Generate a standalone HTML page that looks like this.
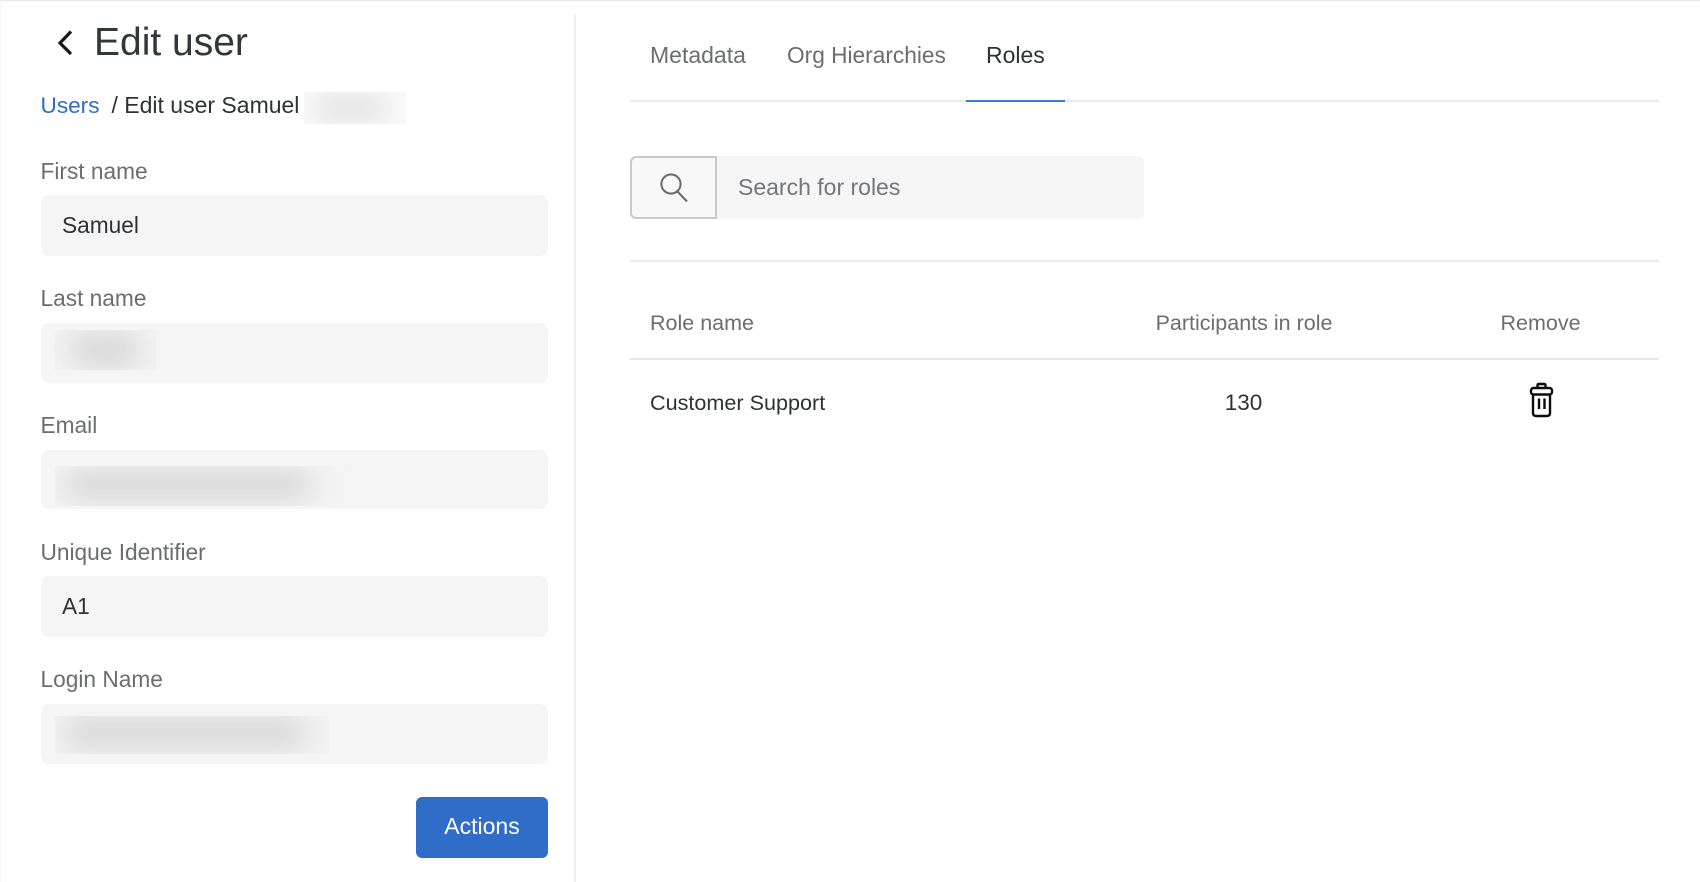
<!DOCTYPE html>
<html>
<head>
<meta charset="utf-8">
<title>Edit user</title>
<style>
html,body{margin:0;padding:0;background:#fff;}
body{position:relative;width:1700px;height:882px;overflow:hidden;font-family:"Liberation Sans",sans-serif;}
.t{position:absolute;white-space:nowrap;line-height:30px;height:30px;}
.lab{left:40.5px;font-size:22.7px;color:#6b6d70;}
.val{left:62px;font-size:22.7px;color:#2f3235;}
.box{position:absolute;left:41px;width:507px;background:#f5f5f5;border-radius:8px;}
.r{position:absolute;background:#e8e8e8;}
.bl{position:absolute;overflow:hidden;background:#f3f3f3;}
.bl i{position:absolute;display:block;background:#dcdddc;filter:blur(13px);}
.tab{font-size:23px;color:#6b6d70;}
.th{font-size:21.5px;color:#6b6d70;}
</style>
</head>
<body>
<div class="r" style="left:0;top:0;width:1700px;height:1px;"></div>
<div class="r" style="left:0;top:0;width:1px;height:882px;background:#f7f7f7;"></div>
<div class="r" style="left:574px;top:15px;width:2px;height:867px;background:#ececec;"></div>

<svg style="position:absolute;left:50px;top:25px" width="30" height="36" viewBox="50 25 30 36"><path d="M71 31.5 L60 43 L71 54" fill="none" stroke="#15171a" stroke-width="3.2"/></svg>
<div class="t" style="left:94px;top:28px;font-size:39px;color:#32363a;">Edit user</div>

<div class="t" style="left:40.5px;top:91px;font-size:22.6px;color:#2f6dc9;">Users</div>
<div class="t" style="left:111.5px;top:90px;font-size:23px;color:#2f3235;">/ Edit user Samuel</div>
<div class="bl" style="left:304px;top:92px;width:102px;height:32px;background:#f9f9f9;"><i style="left:14px;top:2px;width:66px;height:28px;background:#e2e3e2;"></i></div>

<div class="t lab" style="top:156px;">First name</div>
<div class="box" style="top:195px;height:61px;"></div>
<div class="t val" style="top:210px;">Samuel</div>

<div class="t lab" style="top:283px;">Last name</div>
<div class="box" style="top:323px;height:60px;"></div>
<div class="bl" style="left:54px;top:330px;width:102px;height:40px;"><i style="left:18px;top:4px;width:66px;height:32px;background:#d6d7d6;"></i></div>

<div class="t lab" style="top:410px;">Email</div>
<div class="box" style="top:450px;height:59px;"></div>
<div class="bl" style="left:55px;top:466px;width:291px;height:40px;background:#f4f4f4;"><i style="left:10px;top:2px;width:246px;height:34px;background:#dadbda;"></i></div>

<div class="t lab" style="top:537px;">Unique Identifier</div>
<div class="box" style="top:576px;height:61px;"></div>
<div class="t val" style="top:591px;">A1</div>

<div class="t lab" style="top:664px;">Login Name</div>
<div class="box" style="top:704px;height:60px;"></div>
<div class="bl" style="left:55px;top:716px;width:274px;height:38px;background:#f3f3f3;"><i style="left:10px;top:0;width:240px;height:34px;background:#dadbda;"></i></div>

<div style="position:absolute;left:416px;top:797px;width:132px;height:61px;background:#306dc9;border-radius:6px;"></div>
<div class="t" style="left:416px;width:132px;text-align:center;top:811px;font-size:23px;color:#fff;">Actions</div>

<div class="t tab" style="left:650px;top:40px;">Metadata</div>
<div class="t tab" style="left:787px;top:40px;font-size:22.7px;">Org Hierarchies</div>
<div class="t tab" style="left:986px;top:40px;color:#2f3235;">Roles</div>
<div class="r" style="left:630px;top:100px;width:1029px;height:2px;"></div>
<div class="r" style="left:966px;top:100px;width:99px;height:2px;background:#3b7bd9;"></div>

<div style="position:absolute;left:630px;top:156px;width:514px;height:63px;background:#f5f5f5;border-radius:6px;"></div>
<div style="position:absolute;left:630px;top:156px;width:87px;height:63px;box-sizing:border-box;border:2px solid #c9c9c9;border-radius:6px 0 0 6px;background:#f8f8f8;"></div>
<svg style="position:absolute;left:655px;top:170px" width="36" height="36" viewBox="655 170 36 36"><circle cx="671" cy="184" r="9.6" fill="none" stroke="#6b6d70" stroke-width="2.1"/><path d="M677.5 191.5 L687 201.5" fill="none" stroke="#6b6d70" stroke-width="2.1"/></svg>
<div class="t" style="left:738px;top:172px;font-size:23px;color:#73767a;">Search for roles</div>
<div class="r" style="left:630px;top:260px;width:1029px;height:2px;"></div>

<div class="t th" style="left:650px;top:308px;">Role name</div>
<div class="t th" style="left:1044px;width:400px;text-align:center;top:308px;">Participants in role</div>
<div class="t th" style="left:1440.5px;width:200px;text-align:center;top:308px;">Remove</div>
<div class="r" style="left:630px;top:358px;width:1029px;height:2px;"></div>

<div class="t" style="left:650px;top:388px;font-size:21.6px;color:#2f3235;">Customer Support</div>
<div class="t" style="left:1043.5px;width:400px;text-align:center;top:388px;font-size:22.5px;color:#2f3235;">130</div>
<svg style="position:absolute;left:1525.5px;top:380px" width="30" height="40" viewBox="1525 380 30 40"><g fill="none" stroke="#0c0c0c" stroke-width="2.4" stroke-linejoin="round"><path d="M1536.5 388 V385.5 Q1536.5 384 1538 384 H1543 Q1544.5 384 1544.5 385.5 V388"/><rect x="1530" y="388" width="21" height="6.5" rx="2.5"/><path d="M1532 394.5 V413 Q1532 416 1535 416 H1546 Q1549 416 1549 413 V394.5"/><path d="M1538 398.5 V409 M1543.5 398.5 V409"/></g></svg>
</body>
</html>
